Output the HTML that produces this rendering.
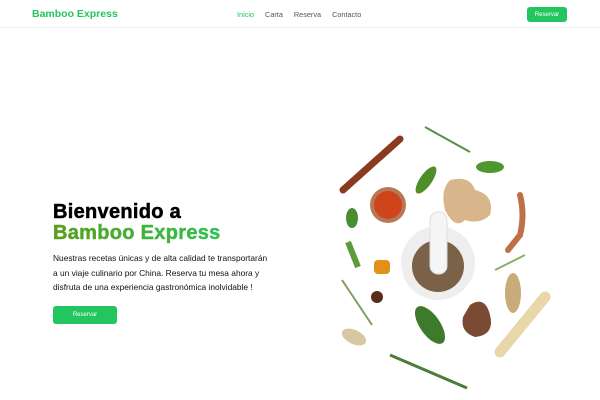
<!DOCTYPE html>
<html><head><meta charset="utf-8"><style>
*{margin:0;padding:0;box-sizing:border-box}
body{width:600px;height:400px;background:#fff;font-family:"Liberation Sans",sans-serif;position:relative;overflow:hidden}
.nav{position:absolute;top:0;left:0;width:600px;height:28px;border-bottom:1px solid #f0f0f0}
.logo{position:absolute;left:32px;top:8px;font-weight:bold;font-size:10.5px;color:#22c55e}
.links{position:absolute;left:237px;top:10px;font-size:7.3px;color:#555}
.links span{margin-right:11px}
.links span:first-child{color:#22c55e}
.btn{position:absolute;background:#22c55e;color:#fff;font-size:6px;border-radius:3px;display:flex;align-items:center;justify-content:center}
h1{position:absolute;left:53px;top:202px;font-size:20px;line-height:21px;font-weight:900;color:#000;letter-spacing:0.3px;-webkit-text-stroke:0.5px}
h1 .g{background:linear-gradient(90deg,#5a9e1a,#2ec255);-webkit-background-clip:text;color:transparent;-webkit-text-stroke:0.5px transparent}
p{position:absolute;left:53px;top:251px;width:250px;font-size:8.4px;line-height:14.5px;color:#111;white-space:nowrap}
svg{position:absolute;left:0;top:0}
</style></head><body>
<div class="nav"><div class="logo">Bamboo Express</div>
<div class="links"><span>Inicio</span><span>Carta</span><span>Reserva</span><span>Contacto</span></div>
<div class="btn" style="left:527px;top:7px;width:40px;height:15px">Reservar</div></div>
<h1>Bienvenido a<br><span class="g">Bamboo Express</span></h1>
<p>Nuestras recetas únicas y de alta calidad te transportarán<br>a un viaje culinario por China. Reserva tu mesa ahora y<br>disfruta de una experiencia gastronómica inolvidable !</p>
<div class="btn" style="left:53px;top:306px;width:64px;height:18px">Reservar</div>
<svg width="600" height="400">
<line x1="343" y1="190" x2="400" y2="139" stroke="#8a3a1e" stroke-width="7" stroke-linecap="round"/>
<circle cx="388" cy="205" r="18" fill="#b57a55"/><circle cx="388" cy="205" r="14" fill="#d0441c"/>
<circle cx="438" cy="263" r="37" fill="#eeeeee"/><circle cx="438" cy="266" r="26" fill="#7a6148"/>
<rect x="430" y="212" width="17" height="62" rx="8" fill="#f5f5f5" stroke="#ddd"/>
<ellipse cx="426" cy="180" rx="6" ry="16" transform="rotate(35 426 180)" fill="#4f8f2a"/>
<ellipse cx="490" cy="167" rx="14" ry="6" fill="#4f962e"/>
<path d="M425 127 L470 152" stroke="#5b8c4a" stroke-width="2"/>
<path d="M450 180 q20 -5 25 10 q20 5 15 25 q-10 10 -25 5 q-10 10 -20 -10 q-5 -20 5 -30z" fill="#d8b58a"/>
<path d="M520 195 q5 20 0 40 l-12 15" stroke="#c07048" stroke-width="6" fill="none" stroke-linecap="round"/>
<ellipse cx="352" cy="218" rx="6" ry="10" fill="#4a8c30"/>
<path d="M348 242 l10 25" stroke="#5c9a3a" stroke-width="6"/>
<rect x="374" y="260" width="16" height="14" rx="4" fill="#e3901a"/>
<circle cx="377" cy="297" r="6" fill="#5a2a1a"/>
<path d="M342 280 l30 45" stroke="#7ea05a" stroke-width="2"/>
<ellipse cx="354" cy="337" rx="13" ry="7" transform="rotate(25 354 337)" fill="#d8c7a3"/>
<ellipse cx="430" cy="325" rx="10" ry="22" transform="rotate(-35 430 325)" fill="#3d7a2c"/>
<path d="M390 355 L467 388" stroke="#4d7d3a" stroke-width="3"/>
<path d="M495 270 l30 -15" stroke="#8ab06a" stroke-width="2"/>
<ellipse cx="513" cy="293" rx="8" ry="20" fill="#c9ab7a"/>
<path d="M500 352 L545 297" stroke="#e8d7a8" stroke-width="11" stroke-linecap="round"/>
<path d="M470 305 q15 -10 20 10 q5 20 -15 22 q-15 -5 -12 -20z" fill="#7a4a32"/>
</svg>
</body></html>
